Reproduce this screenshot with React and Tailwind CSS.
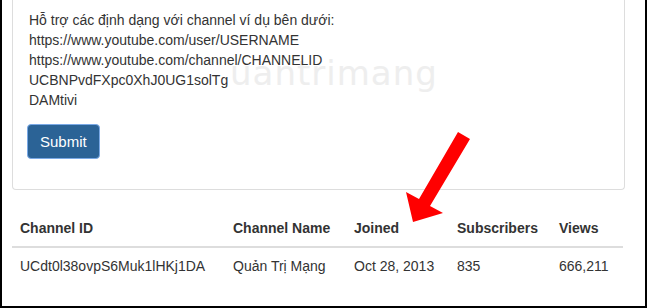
import React from "react";

export default function App() {
  const font = { fontFamily: '"Liberation Sans", Arial, Helvetica, sans-serif' };
  return (
    <div
      className="relative w-[647px] h-[308px] bg-white border-l-2 border-r-2 border-b-2 border-black overflow-hidden text-[14px] leading-[20px] text-[#333]"
      style={font}
    >
      <div
        className="absolute left-[228px] top-[56px] text-[34px] leading-none tracking-[1px] text-[#eeeeee] pointer-events-none select-none"
        style={{ fontFamily: '"DejaVu Sans", sans-serif' }}
      >
        uantrimang
      </div>

      <div className="relative pl-[10px] w-[623px]">
        <div className="border-l border-r border-b border-[#ddd] rounded-b-[4px] px-[16px] pt-[10px] pb-[30px]">
          <div>Hỗ trợ các định dạng với channel ví dụ bên dưới:</div>
          <div>https://www.youtube.com/user/USERNAME</div>
          <div>https://www.youtube.com/channel/CHANNELID</div>
          <div>UCBNPvdFXpc0XhJ0UG1solTg</div>
          <div>DAMtivi</div>
          <button className="mt-[14px] -ml-[2px] h-[35px] px-[12px] rounded-[4px] bg-[#2b6396] border border-[#7aa9e6] text-white text-[15px] leading-[20px]">
            Submit
          </button>
        </div>

        <table className="mt-[20px] w-[611px] border-collapse table-fixed">
          <thead>
            <tr className="border-b-2 border-[#ddd]">
              <th className="w-[213px] text-left font-bold p-[8px]">Channel ID</th>
              <th className="w-[121px] text-left font-bold p-[8px]">Channel Name</th>
              <th className="w-[103px] text-left font-bold p-[8px]">Joined</th>
              <th className="w-[102px] text-left font-bold p-[8px]">Subscribers</th>
              <th className="w-[72px] text-left font-bold p-[8px]">Views</th>
            </tr>
          </thead>
          <tbody>
            <tr>
              <td className="p-[8px]">UCdt0l38ovpS6Muk1lHKj1DA</td>
              <td className="p-[8px]">Quản Trị Mạng</td>
              <td className="p-[8px]">Oct 28, 2013</td>
              <td className="p-[8px]">835</td>
              <td className="p-[8px]">666,211</td>
            </tr>
          </tbody>
        </table>
      </div>

      <svg
        className="absolute left-0 top-0 pointer-events-none"
        width="647"
        height="308"
        viewBox="0 0 647 308"
      >
        <polygon
          points="456,132 468,139 428,206 441,213 411,222 404,192 417,199"
          fill="#ff0000"
        />
      </svg>
    </div>
  );
}
